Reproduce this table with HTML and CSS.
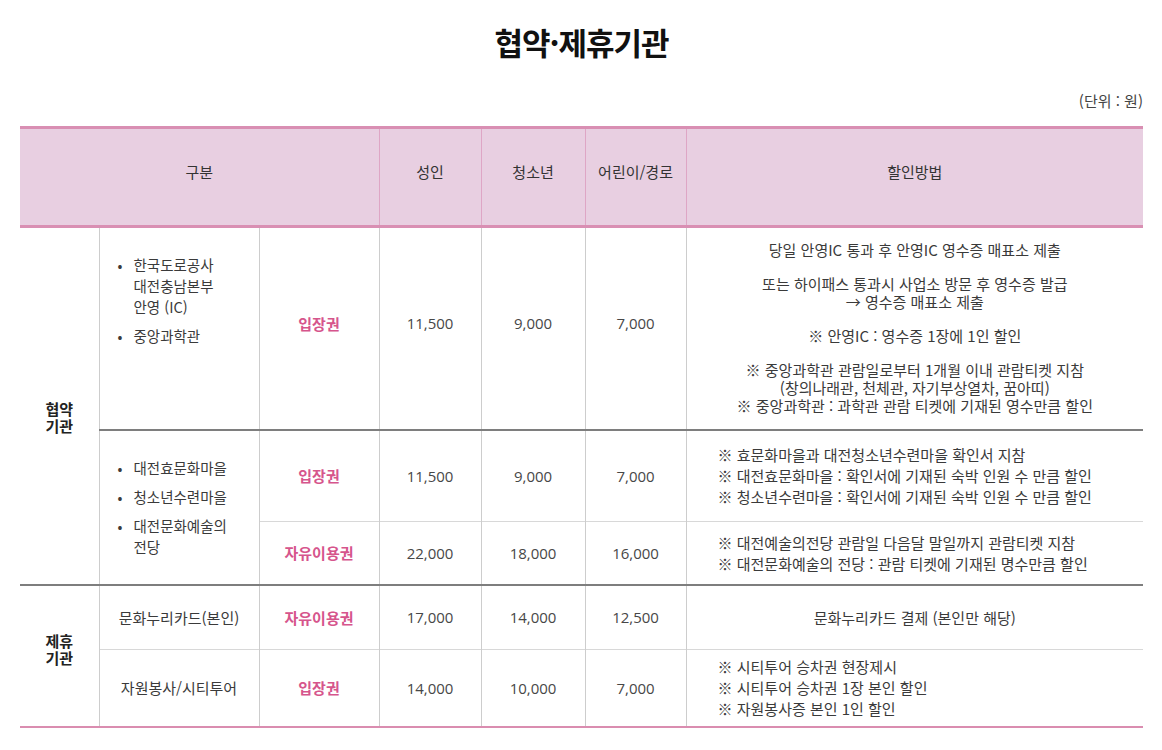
FILE: index.html
```html
<!DOCTYPE html>
<html lang="ko">
<head>
<meta charset="utf-8">
<title>협약·제휴기관</title>
<link rel="stylesheet" href="styles.css">
</head>
<body>
<div class="page">
  <h1 class="title">협약·제휴기관</h1>
  <p class="unit">(단위 : 원)</p>
  <table class="fee">
    <colgroup>
      <col class="c-group">
      <col class="c-org">
      <col class="c-ticket">
      <col class="c-adult">
      <col class="c-youth">
      <col class="c-child">
      <col class="c-method">
    </colgroup>
    <thead>
      <tr>
        <th colspan="3">구분</th>
        <th>성인</th>
        <th>청소년</th>
        <th>어린이/경로</th>
        <th>할인방법</th>
      </tr>
    </thead>
    <tbody>
      <tr class="r1">
        <td rowspan="3" class="group g1">협약<br>기관</td>
        <td class="org org-top">
          <ul class="bullets">
            <li>한국도로공사<br>대전충남본부<br>안영 (IC)</li>
            <li>중앙과학관</li>
          </ul>
        </td>
        <td class="ticket raise">입장권</td>
        <td class="num raise">11,500</td>
        <td class="num raise">9,000</td>
        <td class="num raise">7,000</td>
        <td class="method method-small">
          <p>당일 안영IC 통과 후 안영IC 영수증 매표소 제출</p>
          <p>또는 하이패스 통과시 사업소 방문 후 영수증 발급<br>→ 영수증 매표소 제출</p>
          <p>※ 안영IC : 영수증 1장에 1인 할인</p>
          <p>※ 중앙과학관 관람일로부터 1개월 이내 관람티켓 지참<br>(창의나래관, 천체관, 자기부상열차, 꿈아띠)<br>※ 중앙과학관 : 과학관 관람 티켓에 기재된 영수만큼 할인</p>
        </td>
      </tr>
      <tr class="r2 dark">
        <td rowspan="2" class="org">
          <ul class="bullets">
            <li>대전효문화마을</li>
            <li>청소년수련마을</li>
            <li>대전문화예술의<br>전당</li>
          </ul>
        </td>
        <td class="ticket">입장권</td>
        <td class="num">11,500</td>
        <td class="num">9,000</td>
        <td class="num">7,000</td>
        <td class="method left">※ 효문화마을과 대전청소년수련마을 확인서 지참<br>※ 대전효문화마을 : 확인서에 기재된 숙박 인원 수 만큼 할인<br>※ 청소년수련마을 : 확인서에 기재된 숙박 인원 수 만큼 할인</td>
      </tr>
      <tr class="r3 light">
        <td class="ticket">자유이용권</td>
        <td class="num">22,000</td>
        <td class="num">18,000</td>
        <td class="num">16,000</td>
        <td class="method left">※ 대전예술의전당 관람일 다음달 말일까지 관람티켓 지참<br>※ 대전문화예술의 전당 : 관람 티켓에 기재된 명수만큼 할인</td>
      </tr>
      <tr class="r4 dark">
        <td rowspan="2" class="group g2">제휴<br>기관</td>
        <td class="org center">문화누리카드(본인)</td>
        <td class="ticket">자유이용권</td>
        <td class="num">17,000</td>
        <td class="num">14,000</td>
        <td class="num">12,500</td>
        <td class="method">문화누리카드 결제 (본인만 해당)</td>
      </tr>
      <tr class="r5 light last">
        <td class="org center">자원봉사/시티투어</td>
        <td class="ticket">입장권</td>
        <td class="num">14,000</td>
        <td class="num">10,000</td>
        <td class="num">7,000</td>
        <td class="method left">※ 시티투어 승차권 현장제시<br>※ 시티투어 승차권 1장 본인 할인<br>※ 자원봉사증 본인 1인 할인</td>
      </tr>
    </tbody>
  </table>
</div>
</body>
</html>
```

FILE: styles.css
```css
html, body {
  margin: 0;
  padding: 0;
  background: #ffffff;
}

body {
  font-family: "Noto Sans CJK KR", "Noto Sans", sans-serif;
  color: #3c3c3c;
}

.page {
  padding: 22px 19px 0 20px;
}

.title {
  margin: 0;
  text-align: center;
  font-size: 31px;
  line-height: 40px;
  font-weight: bold;
  letter-spacing: -1px;
  color: #111111;
}

.unit {
  margin: 29px 0 0 0;
  text-align: right;
  font-size: 15px;
  line-height: 20px;
  color: #444444;
}

.fee {
  margin-top: 15px;
  width: 1123px;
  border-collapse: collapse;
  table-layout: fixed;
}

.c-group { width: 79px; }
.c-org { width: 160px; }
.c-ticket { width: 120px; }
.c-adult { width: 102px; }
.c-youth { width: 104px; }
.c-child { width: 101px; }
.c-method { width: 457px; }

.fee th {
  height: 84px;
  padding: 0 0 12px 0;
  background: #e8cfe1;
  border-top: 3px solid #d98fb3;
  border-bottom: 3px solid #d98fb3;
  border-left: 1px solid #dea6c5;
  font-weight: normal;
  font-size: 15px;
  color: #333333;
  text-align: center;
  vertical-align: middle;
}

.fee th:first-child {
  border-left: none;
}

.fee td {
  padding: 0;
  border-left: 1px solid #cdcdcd;
  text-align: center;
  vertical-align: middle;
  font-size: 15px;
}

.fee td.group {
  border-left: none;
}

.fee tr.dark td {
  border-top: 2px solid #7e7e7e;
}

.fee tr.light td {
  border-top: 1px solid #d8d8d8;
}

.fee tr.last td,
.fee td.g2 {
  border-bottom: 2px solid #da8db0;
}

.r1 { height: 203px; }
.r2 { height: 92px; }
.r3 { height: 63px; }
.r4 { height: 65px; }
.r5 { height: 77px; }

.group {
  font-weight: bold;
  font-size: 15px;
  line-height: 17px;
  color: #222222;
}

.g1 {
  padding-top: 23px !important;
}

.g2 {
  padding-bottom: 14px !important;
}

.org {
  text-align: left !important;
  color: #3a3a3a;
}

.org.center {
  text-align: center !important;
}

.org-top {
  vertical-align: top !important;
  padding-top: 26px !important;
}

.bullets {
  list-style: none;
  margin: 0;
  padding: 0 12px 0 18px;
  font-size: 14.5px;
  line-height: 21px;
}

.bullets li {
  padding-left: 16px;
  text-indent: -16px;
}

.bullets li + li {
  margin-top: 8px;
}

.bullets li::before {
  content: "•";
  display: inline-block;
  width: 16px;
  text-indent: 0;
}

.ticket {
  color: #d6558c;
  font-weight: bold;
}

.raise {
  padding-bottom: 10px !important;
}

.num {
  font-family: "Open Sans", "Noto Sans CJK KR", sans-serif;
  font-size: 16px;
  color: #474747;
}

.method {
  color: #3a3a3a;
  line-height: 21px;
}

.method.left {
  text-align: left;
  padding-left: 31px;
}

.method-small {
  font-size: 14px;
  line-height: 18px;
}

.method-small p {
  margin: 16px 0;
}

.method-small p:first-child {
  margin-top: 0;
}

.method-small p:last-child {
  margin-bottom: 0;
}
```
